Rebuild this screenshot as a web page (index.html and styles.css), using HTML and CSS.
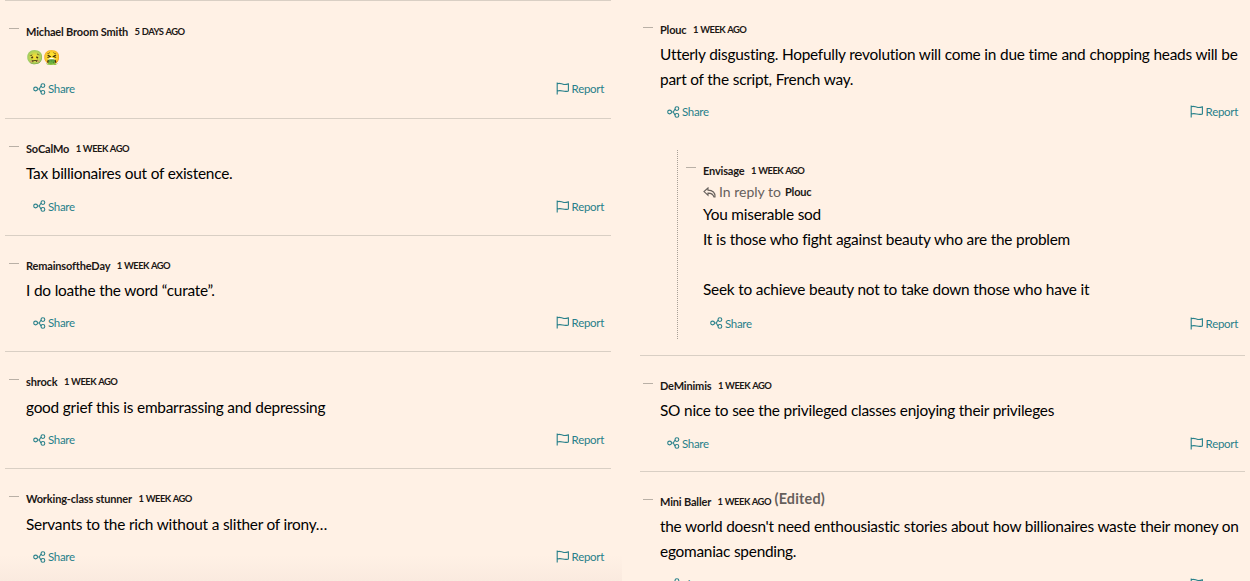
FILE: index.html
```
<!DOCTYPE html>
<html lang="en">
<head>
    <meta charset="UTF-8">
    <meta name="viewport" content="width=device-width, initial-scale=1.0">
    <title>Comments</title>
    <link rel="stylesheet" href="styles.css">
</head>
<body>
    <!-- shared icons -->
    <svg class="sprite" width="0" height="0">
        <symbol id="icon-share" viewBox="0 0 13 12">
            <circle cx="2.6" cy="6" r="1.9"/>
            <circle cx="9.9" cy="2.6" r="1.9"/>
            <circle cx="9.9" cy="9.4" r="1.9"/>
            <path d="M4.5 6h1.5c1 0 1-2.6 2.4-2.8M6 6c1 0 1 2.6 2.4 2.8"/>
        </symbol>
        <symbol id="icon-flag" viewBox="0 0 14 13">
            <path d="M1.2 0.5v12M1.2 1.7c2.6-1.1 4 .2 5.8.6 1.9.4 3.6.1 5.4-.4v7c-2.2.8-3.7.6-5.6.1-2-.5-3.4-.9-5.6.1"/>
        </symbol>
        <symbol id="icon-reply" viewBox="0 0 13 11">
            <path d="M5 1L1 4.6l4 3.6V6.1c3.2-.1 5 .6 6 3.9h1c.3-4.2-2.200-6.800-7-6.900z"/>
        </symbol>
    </svg>

    <div class="comments">
        <div class="column column-left">
            <div class="comment">
                <span class="collapse"></span>
                <div class="comment-header"><span class="author">Michael Broom Smith</span><span class="time">5 DAYS AGO</span></div>
                <p class="comment-text emoji">🤢🤮</p>
                <div class="actions">
                    <a class="action"><svg class="icon-share"><use href="#icon-share"/></svg>Share</a>
                    <a class="action"><svg class="icon-flag"><use href="#icon-flag"/></svg>Report</a>
                </div>
            </div>
            <div class="comment">
                <span class="collapse"></span>
                <div class="comment-header"><span class="author">SoCalMo</span><span class="time">1 WEEK AGO</span></div>
                <p class="comment-text">Tax billionaires out of existence.</p>
                <div class="actions">
                    <a class="action"><svg class="icon-share"><use href="#icon-share"/></svg>Share</a>
                    <a class="action"><svg class="icon-flag"><use href="#icon-flag"/></svg>Report</a>
                </div>
            </div>
            <div class="comment">
                <span class="collapse"></span>
                <div class="comment-header"><span class="author">RemainsoftheDay</span><span class="time">1 WEEK AGO</span></div>
                <p class="comment-text">I do loathe the word “curate”.</p>
                <div class="actions">
                    <a class="action"><svg class="icon-share"><use href="#icon-share"/></svg>Share</a>
                    <a class="action"><svg class="icon-flag"><use href="#icon-flag"/></svg>Report</a>
                </div>
            </div>
            <div class="comment">
                <span class="collapse"></span>
                <div class="comment-header"><span class="author">shrock</span><span class="time">1 WEEK AGO</span></div>
                <p class="comment-text">good grief this is embarrassing and depressing</p>
                <div class="actions">
                    <a class="action"><svg class="icon-share"><use href="#icon-share"/></svg>Share</a>
                    <a class="action"><svg class="icon-flag"><use href="#icon-flag"/></svg>Report</a>
                </div>
            </div>
            <div class="comment">
                <span class="collapse"></span>
                <div class="comment-header"><span class="author">Working-class stunner</span><span class="time">1 WEEK AGO</span></div>
                <p class="comment-text">Servants to the rich without a slither of irony…</p>
                <div class="actions">
                    <a class="action"><svg class="icon-share"><use href="#icon-share"/></svg>Share</a>
                    <a class="action"><svg class="icon-flag"><use href="#icon-flag"/></svg>Report</a>
                </div>
            </div>
        </div>

        <div class="column column-right">
            <div class="comment">
                <span class="collapse"></span>
                <div class="comment-header"><span class="author">Plouc</span><span class="time">1 WEEK AGO</span></div>
                <p class="comment-text">Utterly disgusting. Hopefully revolution will come in due time and chopping heads will be<br>part of the script, French way.</p>
                <div class="actions">
                    <a class="action"><svg class="icon-share"><use href="#icon-share"/></svg>Share</a>
                    <a class="action"><svg class="icon-flag"><use href="#icon-flag"/></svg>Report</a>
                </div>
                <div class="reply">
                    <span class="collapse"></span>
                    <div class="comment-header"><span class="author">Envisage</span><span class="time">1 WEEK AGO</span></div>
                    <div class="in-reply"><svg class="icon-reply"><use href="#icon-reply"/></svg><span class="in-reply-text">In reply to</span><span class="author">Plouc</span></div>
                    <p class="comment-text">You miserable sod<br>It is those who fight against beauty who are the problem<br><br>Seek to achieve beauty not to take down those who have it</p>
                    <div class="actions">
                        <a class="action"><svg class="icon-share"><use href="#icon-share"/></svg>Share</a>
                        <a class="action"><svg class="icon-flag"><use href="#icon-flag"/></svg>Report</a>
                    </div>
                </div>
            </div>
            <div class="comment">
                <span class="collapse"></span>
                <div class="comment-header"><span class="author">DeMinimis</span><span class="time">1 WEEK AGO</span></div>
                <p class="comment-text">SO nice to see the privileged classes enjoying their privileges</p>
                <div class="actions">
                    <a class="action"><svg class="icon-share"><use href="#icon-share"/></svg>Share</a>
                    <a class="action"><svg class="icon-flag"><use href="#icon-flag"/></svg>Report</a>
                </div>
            </div>
            <div class="comment">
                <span class="collapse"></span>
                <div class="comment-header"><span class="author">Mini Baller</span><span class="time">1 WEEK AGO</span><span class="edited">(Edited)</span></div>
                <p class="comment-text">the world doesn't need enthousiastic stories about how billionaires waste their money on<br>egomaniac spending.</p>
                <div class="actions">
                    <a class="action"><svg class="icon-share"><use href="#icon-share"/></svg>Share</a>
                    <a class="action"><svg class="icon-flag"><use href="#icon-flag"/></svg>Report</a>
                </div>
            </div>
        </div>
    </div>
</body>
</html>
```
FILE: styles.css
```
body {
    margin: 0;
    background: #fff1e5;
    color: #1c1815;
    font-family: Lato, "Liberation Sans", sans-serif;
}
.sprite {
    position: absolute;
}
svg {
    fill: none;
    stroke: #28808a;
    stroke-width: 1.1;
    flex: none;
}
.comments {
    display: flex;
    height: 581px;
    overflow: hidden;
}
.column {
    box-sizing: border-box;
    flex: none;
}
.column-left {
    width: 622px;
    padding: 0 11px 0 5px;
    background: linear-gradient(#fff1e5 555px, #faeadf 581px);
}
.column-left .comment:first-child {
    border-top: 1px solid #d9cfc4;
}
.column-right {
    width: 628px;
    padding: 0 5px 0 18px;
}
.comment {
    position: relative;
    box-sizing: border-box;
    padding: 19px 7px 18px 21px;
    border-bottom: 1px solid #d9cfc4;
}
.column-left .comment {
    height: 116.8px;
    padding-top: 19.6px;
}
.column-left .comment:first-child {
    height: 118.8px;
    padding-top: 20px;
}
.column-right .comment {
    padding: 19.2px 7px 18px 20px;
}
.column-right .comment:first-child {
    padding-bottom: 16px;
}
/* small line used to collapse a thread */
.collapse {
    position: absolute;
    top: 27px;
    left: 4px;
    width: 10px;
    height: 1px;
    background: #b9b0a6;
}
.column-right .collapse {
    left: 3px;
}
.comment-header {
    display: flex;
    align-items: center;
    height: 20px;
}
.author {
    font-size: 11px;
    font-weight: 700;
    letter-spacing: -0.17px;
}
.time {
    margin-left: 6.5px;
    font-size: 9.4px;
    font-weight: 700;
    letter-spacing: -0.5px;
    word-spacing: 0.5px;
}
.edited {
    margin-left: 3.5px;
    color: #66605c;
    font-size: 14.4px;
    font-weight: 700;
    letter-spacing: 0.2px;
    line-height: 16px;
    padding-bottom: 4px;
}
.comment-text {
    margin: 2.8px 0 0;
    color: #000;
    font-size: 15.4px;
    line-height: 25px;
    letter-spacing: -0.25px;
    word-spacing: 0.2px;
    white-space: nowrap;
}
.emoji {
    font-size: 14px;
    letter-spacing: -0.2px;
}
.actions {
    display: flex;
    justify-content: space-between;
    height: 20px;
    margin-top: 10px;
    padding-left: 7px;
}
.action {
    display: flex;
    align-items: center;
    color: #28808a;
    font-size: 11.5px;
    letter-spacing: -0.3px;
}
.icon-share {
    width: 13px;
    height: 12px;
    margin-right: 2px;
}
.icon-flag {
    width: 14px;
    height: 13px;
    margin-right: 2px;
}
.reply {
    position: relative;
    margin: 28px 0 0 17px;
    padding: 10.5px 0 6px 25px;
    border-left: 1px dotted #a8a097;
}
.column-right .reply .collapse {
    top: 17px;
    left: 8px;
}
.in-reply {
    display: flex;
    align-items: center;
    height: 22px;
}
.in-reply-text {
    margin: 0 4px 0 3px;
    color: #66605c;
    font-size: 14px;
}
.icon-reply {
    width: 13px;
    height: 11px;
    margin-top: 3px;
    stroke: #66605c;
}
.reply .comment-text {
    margin-top: 0;
}
.reply .actions {
    margin-top: 10.6px;
}
```
